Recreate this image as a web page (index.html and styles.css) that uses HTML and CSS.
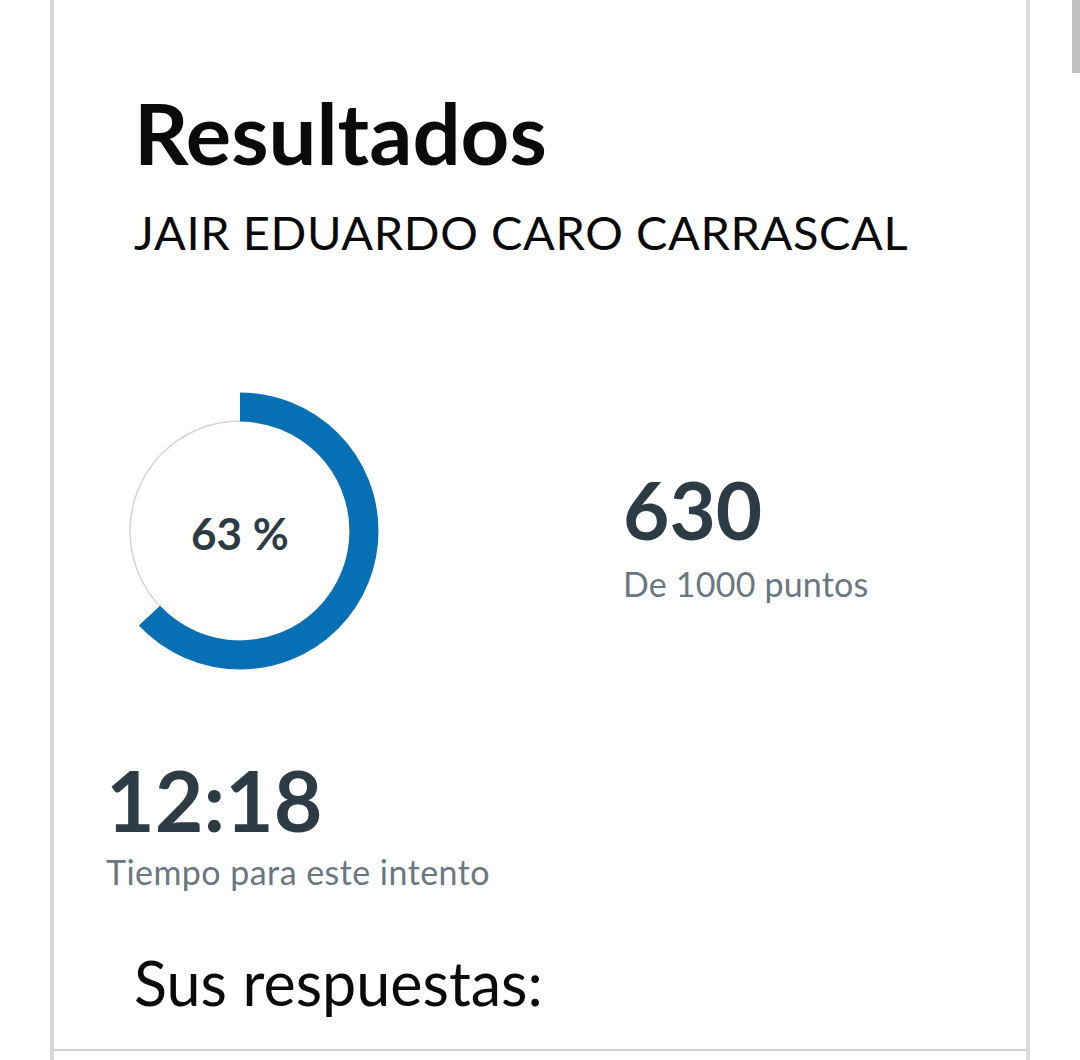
FILE: index.html
```html
<!DOCTYPE html>
<html lang="es">
<head>
<meta charset="utf-8">
<title>Resultados</title>
<link rel="stylesheet" href="styles.css">
</head>
<body>
<div class="page">
  <main class="card">
    <header class="head">
      <h1 class="title">Resultados</h1>
      <p class="student">JAIR EDUARDO CARO CARRASCAL</p>
    </header>
    <section class="score-row">
      <div class="donut">
        <svg width="280" height="280" viewBox="0 0 280 280">
          <circle cx="140" cy="140" r="110" fill="none" stroke="#d2d4d6" stroke-width="1.5"/>
          <circle cx="140" cy="140" r="124" fill="none" stroke="#0770b5" stroke-width="29"
                  stroke-dasharray="490.9 1000" transform="rotate(-90 140 140)"/>
        </svg>
        <span class="donut-label">63 %</span>
      </div>
      <div class="points">
        <div class="big-num">630</div>
        <div class="sub">De 1000 puntos</div>
      </div>
    </section>
    <section class="time">
      <div class="big-num time-num">12:18</div>
      <div class="sub">Tiempo para este intento</div>
    </section>
    <h2 class="answers">Sus respuestas:</h2>
    <hr class="divider">
  </main>
  <div class="scrollbar"></div>
</div>
</body>
</html>
```

FILE: styles.css
```css
html, body {
  margin: 0;
  padding: 0;
  background: #ffffff;
}
body {
  font-family: Lato, "Open Sans", sans-serif;
  width: 1080px;
  height: 1060px;
  overflow: hidden;
}
.page {
  position: relative;
  display: flex;
  padding-left: 50px;
  height: 1060px;
}
.card {
  width: 980px;
  height: 1060px;
  border-left: 4px solid #d9d9d9;
  border-right: 4px solid #dcdcdc;
  box-sizing: border-box;
  display: flex;
  flex-direction: column;
  padding-top: 90px;
}
.head {
  padding-left: 80px;
}
.title {
  margin: 0;
  font-size: 85px;
  line-height: 85px;
  font-weight: 700;
  color: #0a0a0a;
}
.student {
  margin: 34px 0 0;
  font-size: 47px;
  line-height: 47px;
  letter-spacing: 0.6px;
  font-weight: 400;
  color: #0a0a0a;
}
.score-row {
  display: flex;
  margin-top: 135px;
  padding-left: 46px;
}
.donut {
  position: relative;
  width: 280px;
  height: 280px;
}
.donut svg {
  display: block;
}
.donut-label {
  position: absolute;
  inset: 0;
  display: flex;
  align-items: center;
  justify-content: center;
  font-size: 44px;
  font-weight: 700;
  color: #2d3b45;
  padding-top: 4px;
}
.points {
  margin-left: 243px;
  margin-top: 78px;
}
.big-num {
  font-size: 80px;
  line-height: 80px;
  font-weight: 700;
  color: #2d3b45;
}
.sub {
  margin-top: 18px;
  font-size: 34px;
  line-height: 34px;
  letter-spacing: 0.2px;
  color: #6b7780;
}
.time {
  margin-top: 87px;
  padding-left: 52px;
}
.time-num {
  font-size: 84px;
  line-height: 84px;
}
.time .sub {
  margin-top: 13px;
  letter-spacing: 0.45px;
}
.answers {
  margin: 63px 0 0;
  padding-left: 80px;
  font-size: 61px;
  line-height: 61px;
  font-weight: 400;
  color: #0a0a0a;
}
.divider {
  margin: 36px 0 0;
  border: 0;
  border-top: 2px solid #d0d0d0;
  width: 100%;
}
.scrollbar {
  position: absolute;
  top: 0;
  right: 0;
  width: 8px;
  height: 73px;
  background: #c1c1c1;
}
```
